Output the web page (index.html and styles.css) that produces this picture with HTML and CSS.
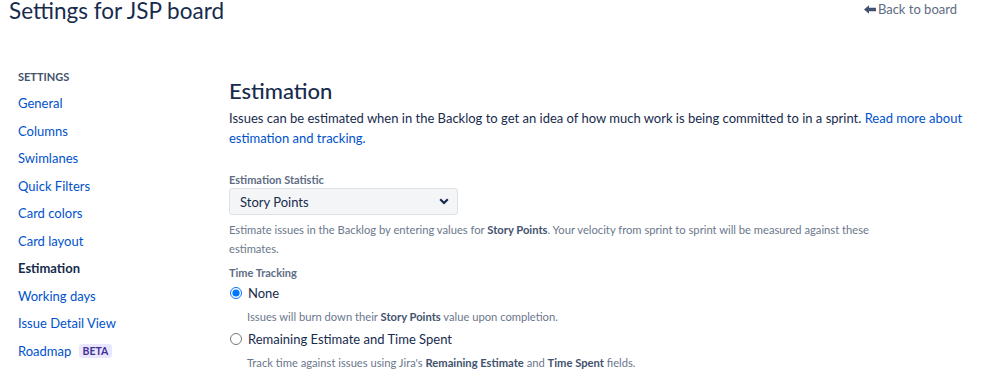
FILE: index.html
```html
<!DOCTYPE html>
<html>
<head>
<meta charset="utf-8">
<link rel="stylesheet" href="styles.css">
</head>
<body>
<header class="topbar">
  <h1 class="page-title">Settings for JSP board</h1>
  <a class="back-link" href="#">
    <svg class="back-icon" width="12" height="9" viewBox="0 0 12 9"><path d="M0 4.5 L5 0.3 L5 2.7 L12 2.7 L12 6.3 L5 6.3 L5 8.7 Z" fill="#42526e"/></svg>Back to board
  </a>
</header>
<div class="layout">
  <nav class="sidebar">
    <div class="side-heading">SETTINGS</div>
    <a class="side-item" href="#">General</a>
    <a class="side-item" href="#">Columns</a>
    <a class="side-item" href="#">Swimlanes</a>
    <a class="side-item" href="#">Quick Filters</a>
    <a class="side-item" href="#">Card colors</a>
    <a class="side-item" href="#">Card layout</a>
    <a class="side-item active" href="#">Estimation</a>
    <a class="side-item" href="#">Working days</a>
    <a class="side-item" href="#">Issue Detail View</a>
    <a class="side-item" href="#">Roadmap <span class="lozenge">BETA</span></a>
  </nav>
  <main class="content">
    <h2 class="section-title">Estimation</h2>
    <p class="intro">Issues can be estimated when in the Backlog to get an idea of how much work is being committed to in a sprint. <a class="link" href="#">Read more about estimation and tracking.</a></p>

    <div class="field">
      <div class="field-label">Estimation Statistic</div>
      <div class="select">
        <span>Story Points</span>
        <svg width="10" height="7" viewBox="0 0 10 7"><path d="M1.2 1.3 L5 5 L8.8 1.3" fill="none" stroke="#172b4d" stroke-width="2.2"/></svg>
      </div>
      <div class="help">Estimate issues in the Backlog by entering values for <b>Story Points</b>. Your velocity from sprint to sprint will be measured against these estimates.</div>
    </div>

    <div class="field tt">
      <div class="field-label">Time Tracking</div>
      <label class="radio-row first"><input type="radio" name="tt" checked><span>None</span></label>
      <div class="help indent">Issues will burn down their <b>Story Points</b> value upon completion.</div>
      <label class="radio-row"><input type="radio" name="tt"><span>Remaining Estimate and Time Spent</span></label>
      <div class="help indent">Track time against issues using Jira's <b>Remaining Estimate</b> and <b>Time Spent</b> fields.</div>
    </div>
  </main>
</div>
</body>
</html>
```
FILE: styles.css
```css
html, body {
  margin: 0;
  padding: 0;
  background: #fff;
}
body {
  font-family: "Lato", "Open Sans", sans-serif;
  color: #172b4d;
  font-size: 13px;
}
a { text-decoration: none; }

.topbar {
  display: flex;
  justify-content: space-between;
  align-items: flex-start;
  padding: 0 42px 0 9px;
  height: 50px;
}
.page-title {
  margin: 0;
  font-size: 22.5px;
  font-weight: 400;
  line-height: 22px;
  color: #172b4d;
}
.back-link {
  display: flex;
  align-items: center;
  gap: 2px;
  color: #5e6c84;
  font-size: 13px;
  line-height: 18px;
}
.back-icon { margin-top: 1px; }

.layout {
  display: grid;
  grid-template-columns: 211px 1fr;
  padding-left: 18px;
}
.sidebar {
  display: flex;
  flex-direction: column;
  padding-top: 18px;
}
.side-heading {
  font-size: 11px;
  font-weight: 700;
  color: #42526e;
  line-height: 18px;
  margin-bottom: 4px;
}
.side-item {
  color: #0052cc;
  line-height: 27.55px;
  font-size: 13px;
}
.side-item.active {
  color: #172b4d;
  font-weight: 700;
}
.lozenge {
  display: inline-block;
  background: #eae6ff;
  color: #403294;
  font-size: 10.5px;
  font-weight: 700;
  line-height: 14px;
  padding: 0 4px;
  border-radius: 3px;
  margin-left: 4px;
  vertical-align: 1px;
}

.content {
  padding-top: 27px;
  padding-right: 24px;
}
.section-title {
  margin: 0;
  font-size: 22px;
  font-weight: 500;
  line-height: 27px;
  color: #172b4d;
}
.intro {
  margin: 5px 0 0;
  line-height: 19.5px;
  color: #172b4d;
}
.link { color: #0052cc; }

.field { margin-top: 24px; }
.field-label {
  font-size: 11px;
  font-weight: 700;
  color: #5e6c84;
  line-height: 16px;
}
.select {
  display: flex;
  align-items: center;
  justify-content: space-between;
  box-sizing: border-box;
  width: 229px;
  height: 27px;
  padding: 0 8px 0 10px;
  background: #f4f5f7;
  border: 1px solid #dfe1e6;
  border-radius: 3px;
  color: #172b4d;
}
.help {
  font-size: 11.2px;
  color: #6b778c;
  line-height: 19px;
  max-width: 645px;
  margin-top: 5px;
}
.help b { color: #42526e; }
.tt { margin-top: 7px; }
.radio-row {
  display: flex;
  align-items: center;
  gap: 6px;
  line-height: 20px;
  margin-top: 3px;
}
.radio-row.first { margin-top: 2px; }
.radio-row input {
  margin: 0 0 0 1px;
  width: 12px;
  height: 12px;
}
.indent {
  margin-left: 18px;
  margin-top: 4px;
}
```
